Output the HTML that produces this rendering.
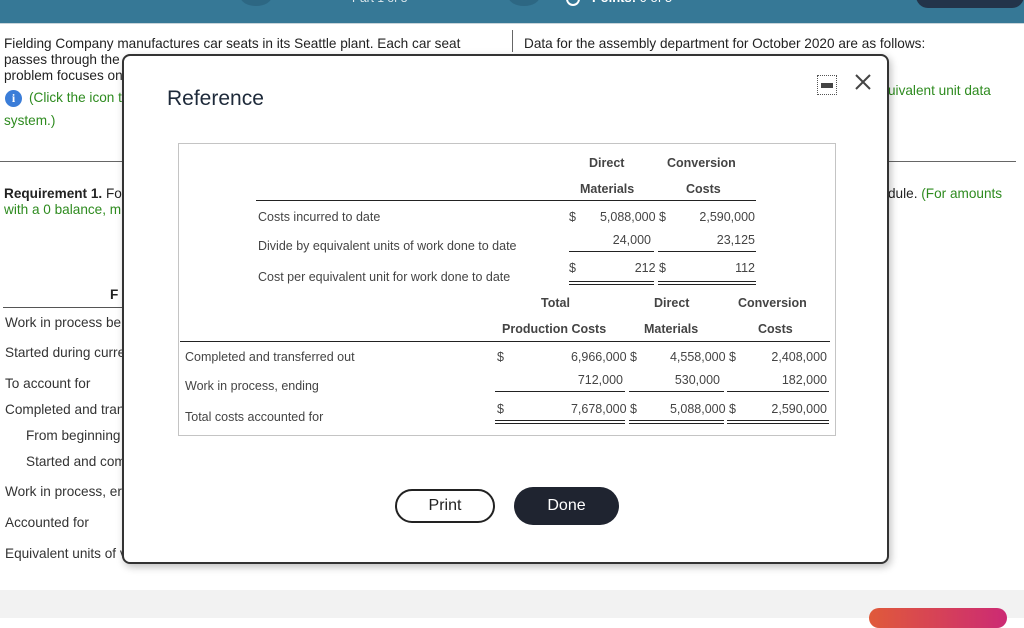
<!DOCTYPE html>
<html><head><meta charset="utf-8"><style>
*{margin:0;padding:0;box-sizing:border-box}
body{width:1024px;height:618px;position:relative;overflow:hidden;background:#fff;font-family:"Liberation Sans",Arial,sans-serif;color:#222}
.a{position:absolute;white-space:nowrap;line-height:16px}
.t{font-size:13.6px}
.g{color:#2e8b1f}
.m{font-size:12.5px;color:#444}
.h{font-size:12.5px;font-weight:bold;color:#444}
.r{text-align:right}
.ln{position:absolute;height:1px;background:#222}
.dl{position:absolute;height:4px;border-top:1px solid #222;border-bottom:1px solid #222}
</style></head><body>
<div style="position:absolute;left:0;top:0;width:1024px;height:24px;background:#367896;border-bottom:1px solid #c8d4da"></div>
<div style="position:absolute;left:240px;top:-14px;width:32px;height:20px;border-radius:50%;background:#2d6783"></div>
<div class="a" style="left:352px;top:-10px;font-size:12px;color:#dfe9ee">Part 1 of 8</div>
<div style="position:absolute;left:508px;top:-14px;width:32px;height:20px;border-radius:50%;background:#2d6783"></div>
<div style="position:absolute;left:566px;top:-8px;width:14px;height:14px;border-radius:50%;border:2px solid #fff"></div>
<div class="a" style="left:592px;top:-10px;font-size:13px;color:#fff"><b>Points:</b> 0 of 5</div>
<div style="position:absolute;left:916px;top:-20px;width:108px;height:28px;border-radius:12px;background:#23344a"></div>

<div style="position:absolute;left:512px;top:30px;width:1px;height:22px;background:#666"></div>
<div class="a t" style="left:4px;top:36px">Fielding Company manufactures car seats in its Seattle plant. Each car seat</div>
<div class="a t" style="left:4px;top:52px">passes through the</div>
<div class="a t" style="left:4px;top:68px">problem focuses on</div>
<div style="position:absolute;left:5px;top:90px;width:17px;height:17px;border-radius:50%;background:#3b7dd8;color:#fff;font:bold 12px/17px 'Liberation Serif',serif;text-align:center">i</div>
<div class="a t g" style="left:29px;top:90px">(Click the icon t</div>
<div class="a t g" style="left:4px;top:113px">system.)</div>
<div class="a t" style="left:524px;top:36px">Data for the assembly department for October 2020 are as follows:</div>
<div class="a t g" style="left:888px;top:83px">uivalent unit data</div>
<div style="position:absolute;left:0;top:161px;width:1016px;height:1px;background:#666"></div>
<div class="a t" style="left:4px;top:186px"><b>Requirement 1.</b> Fo</div>
<div class="a t g" style="left:4px;top:202px">with a 0 balance, m</div>
<div class="a t" style="left:888px;top:186px">dule. <span class="g">(For amounts</span></div>
<div class="a t" style="left:110px;top:287px;font-weight:bold">F</div>
<div style="position:absolute;left:3px;top:307px;width:120px;height:1px;background:#555"></div>
<div class="a t" style="left:5px;top:315px;color:#333">Work in process be</div>
<div class="a t" style="left:5px;top:345px;color:#333">Started during curre</div>
<div class="a t" style="left:5px;top:376px;color:#333">To account for</div>
<div class="a t" style="left:5px;top:402px;color:#333">Completed and tran</div>
<div class="a t" style="left:26px;top:428px;color:#333">From beginning</div>
<div class="a t" style="left:26px;top:454px;color:#333">Started and com</div>
<div class="a t" style="left:5px;top:484px;color:#333">Work in process, er</div>
<div class="a t" style="left:5px;top:515px;color:#333">Accounted for</div>
<div class="a t" style="left:5px;top:546px;color:#333">Equivalent units of v</div>
<div style="position:absolute;left:0;top:590px;width:1024px;height:28px;background:#f2f2f2"></div>
<div style="position:absolute;left:869px;top:608px;width:138px;height:20px;border-radius:10px;background:linear-gradient(90deg,#e05a3a,#cc2a74)"></div>

<div style="position:absolute;left:122px;top:54px;width:767px;height:510px;border:2px solid #333;border-radius:8px;background:#fff;box-shadow:2px 3px 8px rgba(0,0,0,.25)">
<div class="a" style="left:43px;top:30px;font-size:21px;line-height:26px;color:#1e2a3a">Reference</div>
<div style="position:absolute;left:693px;top:19px;width:20px;height:20px;border:1px dotted #555"></div>
<div style="position:absolute;left:697px;top:27px;width:12px;height:5px;background:#444"></div>
<svg style="position:absolute;left:729px;top:16px" width="20" height="20"><path d="M3 3L17 17M17 3L3 17" stroke="#444" stroke-width="2"/></svg>
<div style="position:absolute;left:54px;top:87px;width:658px;height:293px;border:1px solid #c4c4c4"></div>
</div>

<div class="a h" style="left:589px;top:155px">Direct</div>
<div class="a h" style="left:667px;top:155px">Conversion</div>
<div class="a h" style="left:580px;top:181px">Materials</div>
<div class="a h" style="left:686px;top:181px">Costs</div>
<div class="ln" style="left:256px;top:200px;width:500px"></div>
<div class="a m" style="left:258px;top:209px">Costs incurred to date</div>
<div class="a m" style="left:569px;top:209px">$</div>
<div class="a m r" style="left:560px;top:209px;width:106px">5,088,000 $</div>
<div class="a m r" style="left:660px;top:209px;width:95px">2,590,000</div>
<div class="a m r" style="left:560px;top:232px;width:91px">24,000</div>
<div class="a m r" style="left:660px;top:232px;width:95px">23,125</div>
<div class="a m" style="left:258px;top:238px">Divide by equivalent units of work done to date</div>
<div class="ln" style="left:569px;top:251px;width:85px"></div>
<div class="ln" style="left:658px;top:251px;width:98px"></div>
<div class="a m" style="left:569px;top:260px">$</div>
<div class="a m r" style="left:560px;top:260px;width:106px">212 $</div>
<div class="a m r" style="left:660px;top:260px;width:95px">112</div>
<div class="a m" style="left:258px;top:269px">Cost per equivalent unit for work done to date</div>
<div class="dl" style="left:569px;top:281px;width:85px"></div>
<div class="dl" style="left:658px;top:281px;width:98px"></div>

<div class="a h" style="left:541px;top:295px">Total</div>
<div class="a h" style="left:654px;top:295px">Direct</div>
<div class="a h" style="left:738px;top:295px">Conversion</div>
<div class="a h" style="left:502px;top:321px">Production Costs</div>
<div class="a h" style="left:644px;top:321px">Materials</div>
<div class="a h" style="left:758px;top:321px">Costs</div>
<div class="ln" style="left:180px;top:341px;width:650px"></div>
<div class="a m" style="left:185px;top:349px">Completed and transferred out</div>
<div class="a m" style="left:497px;top:349px">$</div>
<div class="a m r" style="left:520px;top:349px;width:117px">6,966,000 $</div>
<div class="a m r" style="left:640px;top:349px;width:96px">4,558,000 $</div>
<div class="a m r" style="left:740px;top:349px;width:87px">2,408,000</div>
<div class="a m r" style="left:520px;top:372px;width:103px">712,000</div>
<div class="a m r" style="left:640px;top:372px;width:80px">530,000</div>
<div class="a m r" style="left:740px;top:372px;width:87px">182,000</div>
<div class="a m" style="left:185px;top:378px">Work in process, ending</div>
<div class="ln" style="left:495px;top:391px;width:130px"></div>
<div class="ln" style="left:629px;top:391px;width:95px"></div>
<div class="ln" style="left:727px;top:391px;width:102px"></div>
<div class="a m" style="left:497px;top:401px">$</div>
<div class="a m r" style="left:520px;top:401px;width:117px">7,678,000 $</div>
<div class="a m r" style="left:640px;top:401px;width:96px">5,088,000 $</div>
<div class="a m r" style="left:740px;top:401px;width:87px">2,590,000</div>
<div class="a m" style="left:185px;top:409px">Total costs accounted for</div>
<div class="dl" style="left:495px;top:420px;width:130px"></div>
<div class="dl" style="left:629px;top:420px;width:95px"></div>
<div class="dl" style="left:727px;top:420px;width:102px"></div>

<div style="position:absolute;left:395px;top:489px;width:100px;height:34px;border:2px solid #222;border-radius:17px;font-size:16px;line-height:30px;text-align:center;color:#222">Print</div>
<div style="position:absolute;left:514px;top:487px;width:105px;height:38px;border-radius:19px;background:#1f2430;font-size:16px;line-height:38px;text-align:center;color:#fff">Done</div>
</body></html>
